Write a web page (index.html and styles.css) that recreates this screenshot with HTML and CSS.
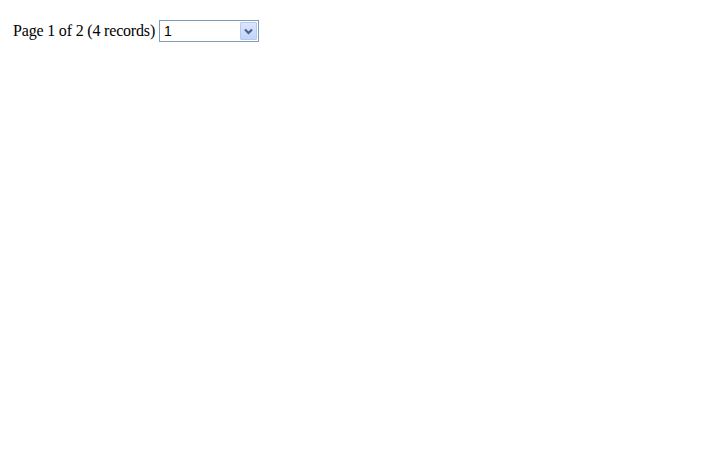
FILE: index.html
```html
<!DOCTYPE html>
<html>
<head>
<meta charset="utf-8">
<link rel="stylesheet" href="styles.css">
</head>
<body>
<div class="pager">
  <span class="info">Page 1 of 2 (4 records)</span>
  <span class="select">
    <span class="value">1</span>
    <span class="btn"><svg width="9" height="7" viewBox="0 0 9 7"><path d="M1 1.5 L4.5 5 L8 1.5" fill="none" stroke="#4d6185" stroke-width="2.2"/></svg></span>
  </span>
</div>
</body>
</html>
```
FILE: styles.css
```css
html, body { margin: 0; padding: 0; background: #fff; }
body { font-family: "Liberation Serif", "Times New Roman", serif; font-size: 16px; color: #000; }
.pager { display: flex; align-items: center; padding: 20px 0 0 13px; }
.info { line-height: 22px; margin-right: 4px; letter-spacing: -0.18px; }
.select {
  display: flex; align-items: stretch;
  width: 98px; height: 20px;
  border: 1px solid #7f9db9;
  background: #fff;
}
.value {
  flex: 1;
  font-family: "Liberation Sans", Arial, sans-serif;
  font-size: 14px;
  line-height: 20px;
  padding-left: 4px;
}
.btn {
  width: 15px; margin: 1px 1px 1px 0;
  border: 1px solid #b6c9f2;
  border-radius: 1px;
  background: linear-gradient(#dbe6fd, #c3d4fb);
  display: flex; align-items: center; justify-content: center;
}
.btn svg { display: block; }
```
